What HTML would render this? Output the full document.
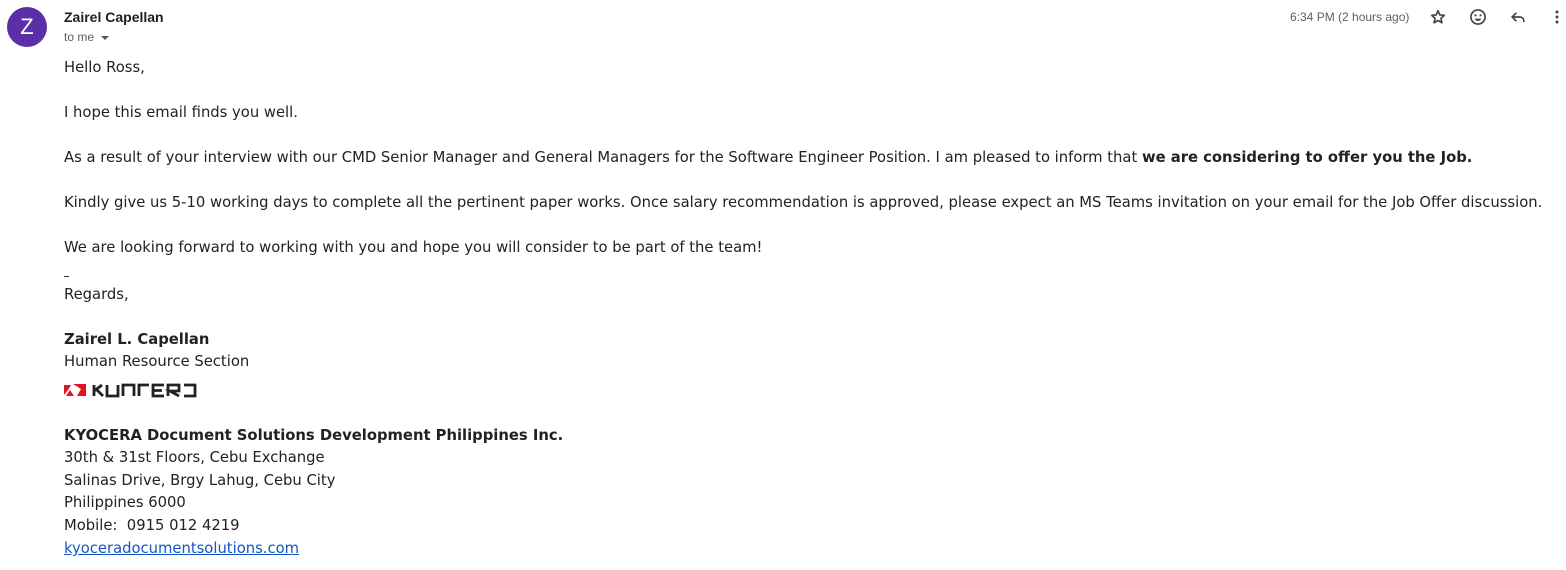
<!DOCTYPE html>
<html><head><meta charset="utf-8"><style>
html,body{margin:0;padding:0;background:#fff;width:1566px;height:570px;overflow:hidden;position:relative}
.t{position:absolute;left:64px;font-family:"DejaVu Sans",Verdana,sans-serif;font-size:14.78px;color:#222;white-space:nowrap;line-height:22px}
b{font-weight:bold}
.h{font-family:"Liberation Sans",Arial,sans-serif;position:absolute;white-space:nowrap}
a{color:#1155cc;text-decoration:underline}
</style></head><body>
<div style="position:absolute;left:7px;top:7px;width:40px;height:40px;border-radius:50%;background:#5b2fa8;color:#fff;font:22px 'Liberation Sans',sans-serif;text-align:center;line-height:40px">Z</div>
<div class="h" style="left:64px;top:9px;font-size:14px;font-weight:bold;color:#1f1f1f">Zairel Capellan</div>
<div class="h" style="left:64px;top:30px;font-size:12px;color:#5e5e5e">to me <span style="display:inline-block;margin-left:4px;border-left:4px solid transparent;border-right:4px solid transparent;border-top:4px solid #555;vertical-align:middle"></span></div>
<div class="h" style="left:1290px;top:10px;font-size:12px;color:#5e5e5e">6:34 PM (2 hours ago)</div>
<svg style="position:absolute;left:1428px;top:7px" width="20" height="20" viewBox="0 0 24 24"><path d="M12 4.5l2.2 5 5.3.5-4 3.6 1.2 5.3L12 16.2 7.3 18.9l1.2-5.3-4-3.6 5.3-.5z" fill="none" stroke="#444" stroke-width="2" stroke-linejoin="round"/></svg>
<svg style="position:absolute;left:1468px;top:7px" width="20" height="20" viewBox="0 0 24 24"><circle cx="12" cy="12" r="8.5" fill="none" stroke="#444" stroke-width="2"/><circle cx="9" cy="10" r="1.3" fill="#444"/><circle cx="15" cy="10" r="1.3" fill="#444"/><path d="M8 14c1 2 2.3 2.8 4 2.8s3-.8 4-2.8z" fill="#444"/></svg>
<svg style="position:absolute;left:1508px;top:7px" width="20" height="20" viewBox="0 0 24 24"><path d="M10 7L5 12l5 5M5 12h9c3 0 5 2 5 5v1" fill="none" stroke="#444" stroke-width="2"/></svg>
<svg style="position:absolute;left:1547px;top:7px" width="20" height="20" viewBox="0 0 24 24"><circle cx="12" cy="6" r="1.8" fill="#444"/><circle cx="12" cy="12" r="1.8" fill="#444"/><circle cx="12" cy="18" r="1.8" fill="#444"/></svg>

<div class="t" style="top:57px">Hello Ross,</div>
<div class="t" style="top:102px">I hope this email finds you well.</div>
<div class="t" style="top:147px">As a result of your interview with our CMD Senior Manager and General Managers for the Software Engineer Position. I am pleased to inform that <b>we are considering to offer you the Job.</b></div>
<div class="t" style="top:192px">Kindly give us 5-10 working days to complete all the pertinent paper works. Once salary recommendation is approved, please expect an MS Teams invitation on your email for the Job Offer discussion.</div>
<div class="t" style="top:237px">We are looking forward to working with you and hope you will consider to be part of the team!</div>
<div style="position:absolute;left:64px;top:276px;width:5px;height:1px;background:#333"></div>
<div class="t" style="top:284px">Regards,</div>
<div class="t" style="top:329px"><b>Zairel L. Capellan</b></div>
<div class="t" style="top:351px">Human Resource Section</div>
<svg style="position:absolute;left:64px;top:382px" width="134" height="16" viewBox="0 0 134 16">
<polygon points="0,3 7,3 4,8 0,13" fill="#e0141e"/><polygon points="9,2 22,2 22,14 13,14 17,7" fill="#e0141e"/><polygon points="2,14 6,8 10,14" fill="#e0141e"/>
<g fill="none" stroke="#222" stroke-width="2.8"><path d="M30 3v11M30 9l8-6M33 8l6 6"/><path d="M43 3v11h11V3"/><path d="M59 14V3h11v11"/><path d="M75 14V3h10"/><path d="M100 3H89v11h11M89 8.5h9"/><path d="M104 14V3h11v6h-9l9 5"/><path d="M120 3h11v11h-11"/></g></svg>
<div class="t" style="top:425px"><b>KYOCERA Document Solutions Development Philippines Inc.</b></div>
<div class="t" style="top:447px">30th &amp; 31st Floors, Cebu Exchange</div>
<div class="t" style="top:470px">Salinas Drive, Brgy Lahug, Cebu City</div>
<div class="t" style="top:492px">Philippines 6000</div>
<div class="t" style="top:515px">Mobile:&nbsp; 0915 012 4219</div>
<div class="t" style="top:538px"><a>kyoceradocumentsolutions.com</a></div>
</body></html>
